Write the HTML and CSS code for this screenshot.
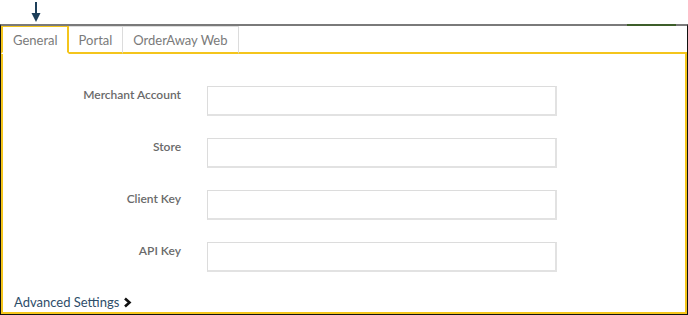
FILE: index.html
```html
<!DOCTYPE html>
<html lang="en">
<head>
    <meta charset="UTF-8">
    <meta name="viewport" content="width=device-width, initial-scale=1.0">
    <title>Payment Settings</title>
    <link rel="stylesheet" href="styles.css">
</head>
<body>
    <div class="pointer">
        <svg width="12" height="22" viewBox="0 0 12 22">
            <line x1="6" y1="1" x2="6" y2="14" stroke="#1d3f5a" stroke-width="2"/>
            <polygon points="1.5,12 10.5,12 6,21" fill="#1d3f5a"/>
        </svg>
    </div>

    <div class="frame">
        <div class="tabs">
            <div class="tab active">General</div>
            <div class="tab">Portal</div>
            <div class="tab">OrderAway Web</div>
        </div>

        <div class="panel">
            <div class="form">
                <label class="label">Merchant Account</label>
                <input class="field" type="text">

                <label class="label">Store</label>
                <input class="field" type="text">

                <label class="label">Client Key</label>
                <input class="field" type="text">

                <label class="label">API Key</label>
                <input class="field" type="text">
            </div>

            <a class="advanced" href="#">Advanced Settings
                <svg width="9" height="11" viewBox="0 0 9 11">
                    <polyline points="2,1.5 6.5,5.5 2,9.5" fill="none" stroke="#111" stroke-width="2.6"/>
                </svg>
            </a>
        </div>
    </div>
</body>
</html>
```

FILE: styles.css
```css
body {
    margin: 0;
    background-color: white;
    font-family: Lato, "Noto Sans", sans-serif;
    overflow: hidden;
}

.pointer {
    height: 24px;
    padding-left: 30px;
    box-sizing: border-box;
    padding-top: 1px;
}

.pointer svg {
    display: block;
}

.frame {
    position: relative;
    height: 291px;
    box-sizing: border-box;
    border-top: 2px solid #7a7a7a;
    border-left: 1px solid #111;
    border-right: 1px solid #111;
    border-bottom: 1px solid #111;
    display: flex;
    flex-direction: column;
}

/* little green highlight on the top rule */
.frame::after {
    content: "";
    position: absolute;
    top: -2px;
    left: 626px;
    width: 49px;
    height: 2px;
    background-color: #3d5e2a;
}

.tabs {
    display: flex;
    margin-bottom: -2px;
    position: relative;
    z-index: 1;
}

.tab {
    height: 28px;
    padding: 0 10px;
    box-sizing: border-box;
    display: flex;
    align-items: center;
    font-size: 13px;
    color: #7a7a7a;
    border-top: 1px solid #dcdcdc;
    border-right: 1px solid #dcdcdc;
    border-bottom: 2px solid #f4c51c;
    background-color: white;
}

.tab.active {
    border: 2px solid #f4c51c;
    border-top-width: 1.5px;
    border-bottom: 2px solid white;
    padding: 0 9px 0 10px;
}

.panel {
    flex: 1;
    border: 2px solid #f4c51c;
    display: flex;
    flex-direction: column;
    justify-content: space-between;
    padding: 32px 0 2px 11px;
}

.form {
    display: grid;
    grid-template-columns: 167px 350px;
    column-gap: 26px;
    row-gap: 22px;
}

.label {
    text-align: right;
    font-size: 12px;
    font-weight: 600;
    color: #6a6a6a;
    padding-top: 1px;
}

.field {
    height: 30px;
    margin: 0;
    box-sizing: border-box;
    border: 1px solid #dcdcdc;
    border-bottom: 2px solid #e2e2e2;
    border-right: 2px solid #e2e2e2;
    background-color: white;
}

.advanced {
    display: flex;
    align-items: center;
    gap: 4px;
    font-size: 13px;
    color: #2e4d69;
    text-decoration: none;
}
```
